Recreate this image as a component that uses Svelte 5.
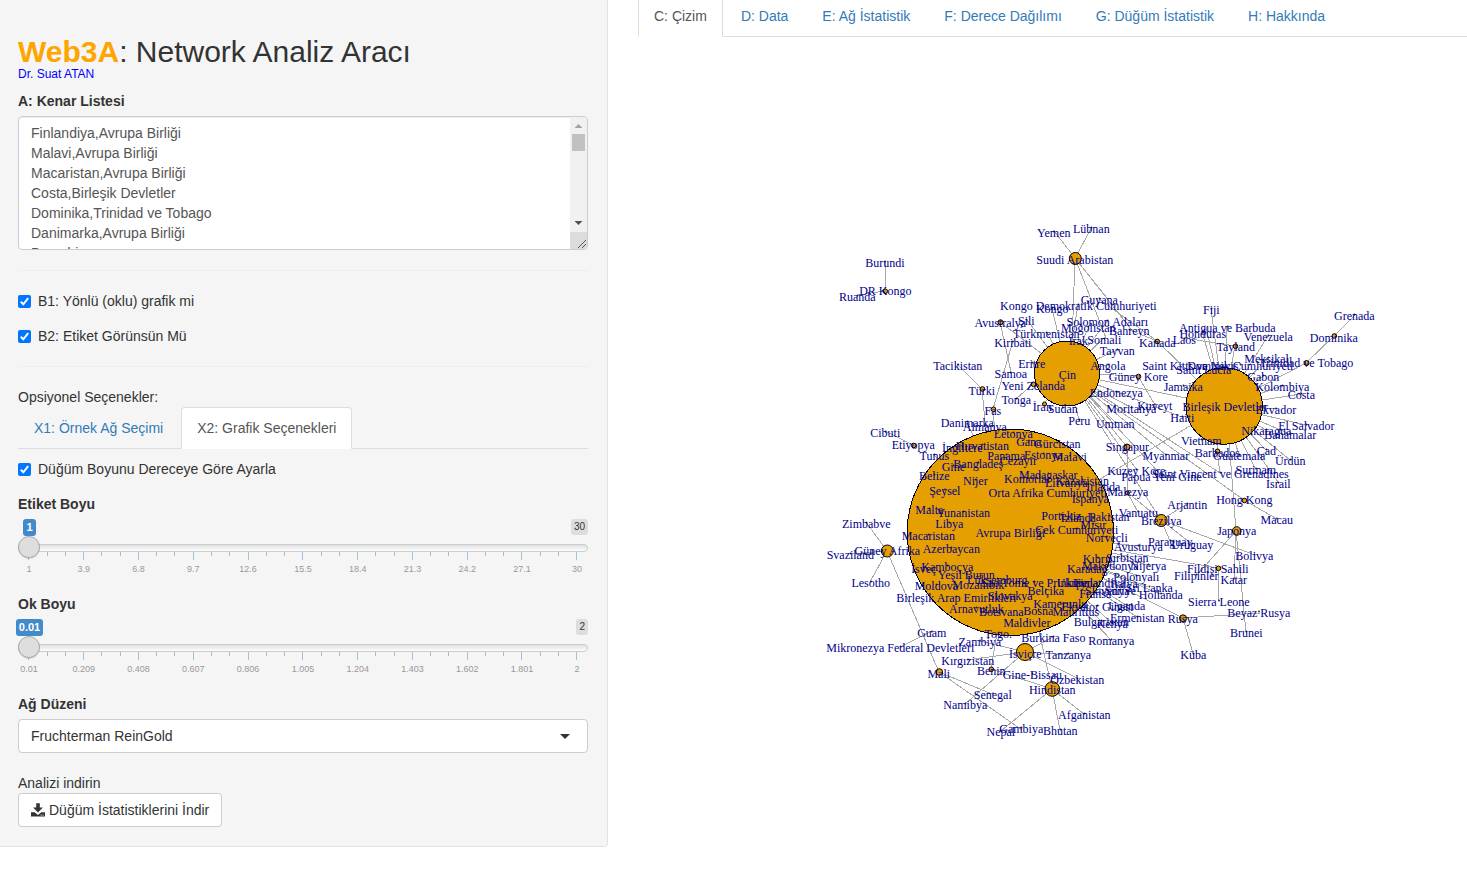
<script>
  const rows = [
    'Finlandiya,Avrupa Birliği',
    'Malavi,Avrupa Birliği',
    'Macaristan,Avrupa Birliği',
    'Costa,Birleşik Devletler',
    'Dominika,Trinidad ve Tobago',
    'Danimarka,Avrupa Birliği',
    'Brezalricya'
  ];

  const tabs = ['C: Çizim', 'D: Data', 'E: Ağ İstatistik', 'F: Derece Dağılımı', 'G: Düğüm İstatistik', 'H: Hakkında'];

  const sliders = [
    { label: 'Etiket Boyu', value: '1', max: '30', ticks: ['1', '3.9', '6.8', '9.7', '12.6', '15.5', '18.4', '21.3', '24.2', '27.1', '30'] },
    { label: 'Ok Boyu', value: '0.01', max: '2', ticks: ['0.01', '0.209', '0.408', '0.607', '0.806', '1.005', '1.204', '1.403', '1.602', '1.801', '2'] }
  ];
  const minor = Array.from({ length: 31 }, (_, i) => i);

  // Circles: x, y, radius
  const hubs = [
    [1010.4, 532.3, 103.2], [1067, 373.5, 32.5], [1224.2, 406, 38.3],
    [1075.3, 258.5, 6], [887.3, 551, 6], [1025, 652, 8.5], [1052.3, 689, 7.3],
    [1161.2, 520.5, 6], [1236.7, 531, 4.3], [1183, 618.3, 3.5], [939.3, 672, 3.3],
    [1127, 447, 3], [1244.5, 500.5, 2.3], [1218.5, 568.3, 2.3], [1157.3, 341.5, 2.3],
    [1138.5, 376.5, 2.3], [1235.5, 346.3, 2.3], [1306.5, 363, 2.5], [1334.3, 336, 2.3],
    [1217.5, 451.3, 2.3], [1000.5, 322.3, 2.5], [982.5, 389, 2.3], [993.5, 409.3, 2.3],
    [913.7, 445.5, 2.3], [885.3, 291.3, 2.3], [1033.5, 384.3, 2.3], [991.3, 669.3, 2.3],
    [1127.3, 492.8, 2], [1044.5, 404, 2]
  ];

  // Labels: text, centre x, centre y
  const labels = [
    ['Yemen', 1053.5, 233], ['Lübnan', 1091, 229], ['Suudi Arabistan', 1074.5, 260],
    ['Burundi', 884.5, 263], ['DR Kongo', 885, 291], ['Ruanda', 857, 297],
    ['Kongo Demokratik Cumhuriyeti', 1078, 306], ['Kongo', 1052, 309], ['Guyana', 1099, 300],
    ['Avustralya', 1000, 323], ['Şili', 1026, 321], ['Türkmenistan', 1046, 334],
    ['Solomon Adaları', 1107, 322], ['Moğolistan', 1088, 328], ['Bahreyn', 1129, 331],
    ['Irak', 1078, 341], ['Somali', 1104, 340], ['Kiribati', 1012.5, 343], ['Tayvan', 1117, 351],
    ['Kanada', 1157, 343], ['Laos', 1184, 340], ['Eritre', 1031.5, 364], ['Angola', 1107.5, 366],
    ['Samoa', 1010.5, 374], ['Çin', 1067, 375], ['Güney Kore', 1138, 377], ['Yeni Zelanda', 1033, 386],
    ['Tonga', 1016, 400], ['İran', 1042, 407], ['Sudan', 1062.5, 409], ['Endonezya', 1116, 393],
    ['Moritanya', 1131, 409], ['Kuveyt', 1154.5, 406], ['Peru', 1079, 421], ['Umman', 1115, 424],
    ['Tacikistan', 957.5, 366], ['Türki', 981.5, 391], ['Fas', 992.5, 411], ['Danimarka', 967, 423],
    ['Almanya', 984.5, 427], ['Cibuti', 885, 433], ['Etiyopya', 913, 445],
    ['Fiji', 1211, 310], ['Antigua ve Barbuda', 1227, 328], ['Honduras', 1202.5, 334],
    ['Venezuela', 1268, 337], ['Tayland', 1235.5, 347], ['Meksikalı', 1268, 359],
    ['Trinidad ve Tobago', 1306, 363], ['Grenada', 1354, 316], ['Dominika', 1333.5, 338],
    ['Saint Kitts ve Nevis', 1190, 366], ['Dominik Cumhuriyeti', 1240, 366], ['Saint Lucia', 1203.5, 370],
    ['Gabon', 1263, 377], ['Jamaika', 1183, 387], ['Kolombiya', 1282, 387], ['Costa', 1301, 395],
    ['Birleşik Devletler', 1225, 407], ['Ekvador', 1275.5, 410], ['Haiti', 1182, 418],
    ['El Salvador', 1306, 426], ['Nikaragua', 1266, 431], ['Bahamalar', 1290, 435],
    ['Vietnam', 1201, 441], ['Barbados', 1217, 453], ['Guatemala', 1239, 456], ['Çad', 1266, 451],
    ['Ürdün', 1290, 461], ['Surinam', 1255.5, 470], ['Saint Vincent ve Grenadines', 1220, 474],
    ['İsrail', 1278, 484], ['Singapur', 1127, 447], ['Myanmar', 1165.5, 456], ['Kuzey Kore', 1136, 471],
    ['Papua Yeni Gine', 1161, 477], ['Malezya', 1127.5, 492], ['Vanuatu', 1138, 513],
    ['Brezilya', 1161, 521], ['Arjantin', 1187, 505], ['Hong Kong', 1244, 500], ['Macau', 1276.5, 520],
    ['Japonya', 1236.5, 531], ['Paraguay', 1170, 542], ['Uruguay', 1192, 545], ['Bolivya', 1254, 556],
    ['Fildişi Sahili', 1217.5, 569], ['Filipinler', 1196, 576], ['Katar', 1233.5, 580],
    ['Sierra Leone', 1218.5, 602], ['Beyaz Rusya', 1258.5, 613], ['Brunei', 1246, 633],
    ['Rusya', 1182.5, 619], ['Küba', 1193, 655],
    ['Letonya', 1013, 434], ['Gana', 1028.5, 442], ['Gürcistan', 1057, 444], ['İngiltere', 962, 448],
    ['Hırvatistan', 982, 446], ['Panama', 1006, 456], ['Estonya', 1043, 455], ['Malavi', 1069.5, 457],
    ['Tunus', 934, 456], ['Bangladeş', 978, 464], ['Cezayir', 1018, 461], ['Gine', 953, 467],
    ['Belize', 934, 476], ['Nijer', 975, 481], ['Komorlar', 1027, 479], ['Madagaskar', 1048, 475],
    ['Litvanya', 1066, 483], ['Kazakistan', 1082, 481], ['İrlanda', 1103, 487],
    ['Orta Afrika Cumhuriyeti', 1047.5, 493], ['İspanya', 1090, 499], ['Şeysel', 944.5, 491],
    ['Malta', 929, 510], ['Yunanistan', 963, 513], ['Libya', 949, 524], ['Macaristan', 928, 536],
    ['Portekiz', 1061, 516], ['İzlanda', 1078, 518], ['Pakistan', 1109, 517], ['Mısır', 1093, 525],
    ['Avrupa Birliği', 1010, 533], ['Çek Cumhuriyeti', 1076.5, 530], ['Norveçli', 1106.5, 538],
    ['Avusturya', 1138, 547], ['Azerbaycan', 951, 549], ['Kıbrıs', 1097.5, 559], ['Sırbistan', 1127, 558],
    ['Makedonya', 1110, 566], ['Nijerya', 1148, 566], ['Karadağ', 1087, 569], ['Polonyalı', 1136, 577],
    ['Kamboçya', 947, 567], ['İsveç', 923.5, 569], ['Yeşil Burun', 966, 575], ['Moldova', 936, 586],
    ['Mozambik', 978, 585], ['Lüksemburg', 997, 580], ['Sao Tome ve Prinkipe', 1034, 583],
    ['Ukrayna', 1077, 583], ['Finlandiya', 1099, 583], ['İtalya', 1124, 584], ['Sri Lanka', 1149, 588],
    ['Slovenya', 1107, 591], ['Suriye', 1120, 591], ['Hollanda', 1160.5, 595], ['Fransa', 1095, 594],
    ['Belçika', 1045.5, 591], ['Slovakya', 1010, 596], ['Birleşik Arap Emirlikleri', 956, 598],
    ['Kamerunlu', 1060, 604], ['Arnavutluk', 976, 609], ['Botsvana', 1001, 612], ['Bosna', 1038, 611],
    ['Mauritius', 1075.5, 612], ['Ekvator Ginesi', 1097, 607], ['Uganda', 1126.5, 606],
    ['Ermenistan', 1137, 618], ['Bulgaristan', 1101, 622], ['Kenya', 1112, 624], ['Maldivler', 1026.5, 623],
    ['Romanya', 1111, 641], ['Zimbabve', 866, 524], ['Güney Afrika', 887, 551], ['Svaziland', 850, 555],
    ['Lesotho', 870.5, 583], ['Guam', 931.5, 633], ['Mikronezya Federal Devletleri', 900, 648],
    ['Mali', 938.5, 674], ['Togo.', 998, 634], ['Zambiya', 979.5, 642], ['Kırgızistan', 967.5, 661],
    ['Benin', 991, 671], ['İsviçre', 1025, 654], ['Burkina Faso', 1053, 638], ['Tanzanya', 1068, 655],
    ['Gine-Bissau', 1032, 675], ['Özbekistan', 1077, 680], ['Hindistan', 1052, 690],
    ['Senegal', 992.5, 695], ['Namibya', 965, 705], ['Afganistan', 1084, 715], ['Gambiya', 1021, 729],
    ['Nepal', 1000.5, 732], ['Bhutan', 1060, 731]
  ];

  // Leaf countries get a tiny dot; hubs already have their own circle
  const leaves = labels.filter(([, x, y]) => !hubs.some(([hx, hy]) => Math.hypot(hx - x, hy - y) < 4));

  // Edges: x1, y1, x2, y2
  const edges = [
    [1054, 231, 1075, 258], [1092, 227, 1075, 258], [1075, 258, 1072, 345], [1075, 258, 1106, 338],
    [1075, 258, 1131, 329], [1075, 258, 1107, 298], [885, 262, 885, 291], [858, 295, 885, 291],
    [1000, 322, 1067, 373], [1000, 322, 1011, 372], [1013, 341, 993, 409],
    [1027, 320, 1067, 373], [1052, 308, 1067, 373], [1078, 305, 1067, 373], [1047, 332, 1067, 373],
    [1099, 299, 1157, 341], [1108, 320, 1067, 373], [1089, 327, 1067, 373], [1104, 338, 1067, 373],
    [1117, 350, 1067, 373], [1107, 365, 1067, 373], [1130, 330, 1157, 341], [1157, 341, 1224, 406],
    [1138, 376, 1067, 373], [1138, 376, 1155, 405], [1033, 384, 1016, 399], [1044, 404, 1067, 373],
    [1062, 407, 1067, 373], [1079, 420, 1067, 373], [1032, 363, 1067, 373],
    [1067, 373, 1224, 406], [1067, 373, 1116, 392], [1067, 373, 1132, 408], [1067, 373, 1116, 423],
    [1067, 373, 1127, 447], [1067, 373, 1166, 455], [1067, 373, 1137, 470], [1067, 373, 1162, 476],
    [1067, 373, 1244, 500], [1067, 373, 1161, 520], [1067, 373, 1182, 417], [1067, 373, 1220, 473],
    [957, 364, 982, 389], [982, 389, 986, 432], [993, 409, 995, 435], [967, 422, 975, 440],
    [885, 431, 913, 445], [934, 455, 960, 480],
    [1211, 309, 1224, 406], [1202, 332, 1224, 406], [1206, 327, 1224, 406], [1227, 326, 1224, 406],
    [1268, 336, 1224, 406], [1235, 346, 1224, 406], [1235, 346, 1184, 338], [1268, 357, 1224, 406],
    [1306, 363, 1224, 406], [1306, 363, 1334, 336], [1334, 336, 1355, 315], [1263, 376, 1224, 406],
    [1282, 386, 1224, 406], [1301, 394, 1224, 406], [1275, 409, 1224, 406], [1306, 425, 1224, 406],
    [1290, 434, 1224, 406], [1266, 430, 1224, 406], [1266, 450, 1224, 406], [1290, 460, 1224, 406],
    [1278, 482, 1224, 406], [1255, 468, 1224, 406], [1239, 455, 1224, 406], [1217, 451, 1224, 406],
    [1217, 451, 1220, 473], [1201, 440, 1224, 406], [1183, 386, 1224, 406], [1182, 417, 1224, 406],
    [1224, 406, 1010, 532], [1229, 440, 1236, 531], [1244, 500, 1277, 519],
    [1127, 447, 1127, 492], [1127, 492, 1138, 512], [1127, 492, 1161, 520],
    [1161, 520, 1187, 504], [1161, 520, 1170, 541], [1161, 520, 1192, 544], [1161, 520, 1255, 555],
    [1236, 531, 1197, 575], [1236, 531, 1234, 579], [1236, 531, 1246, 632],
    [1010, 532, 1218, 568], [1218, 568, 1219, 600], [1010, 532, 1183, 618],
    [1183, 618, 1260, 613], [1183, 618, 1193, 653],
    [1010, 532, 1138, 546], [1010, 532, 1127, 556], [1010, 532, 1148, 565], [1010, 532, 1136, 575],
    [1010, 532, 1148, 587], [1010, 532, 1160, 594], [1010, 532, 1126, 605], [1010, 532, 1137, 617],
    [1010, 532, 1101, 621], [1010, 532, 1112, 623], [1010, 532, 1111, 640],
    [866, 522, 887, 551], [850, 554, 887, 551], [870, 582, 887, 551], [887, 551, 939, 672],
    [932, 631, 900, 647], [939, 672, 992, 694], [939, 672, 1022, 730],
    [997, 633, 991, 669], [980, 641, 1025, 652], [967, 660, 1025, 652], [1025, 652, 1053, 637],
    [1025, 652, 1068, 655], [1025, 652, 1077, 678], [1025, 652, 965, 704], [997, 633, 1000, 620],
    [1039, 631, 1052, 689], [1052, 689, 991, 669], [1052, 689, 1084, 714], [1052, 689, 1060, 730],
    [1052, 689, 1001, 731]
  ];
</script>

<div class="page">
  <aside class="well">
    <h2><b>Web3A</b>: Network Analiz Aracı</h2>
    <p class="author">Dr. Suat ATAN</p>
    <div class="label">A: Kenar Listesi</div>
    <div class="textarea">
      <div class="lines">
        {#each rows as row}<div>{row}</div>{/each}
      </div>
      <div class="scroll">
        <svg width="17" height="132" viewBox="0 0 17 132">
          <rect width="17" height="132" fill="#f1f1f1" />
          <path d="M4.5 11 L8.5 7 L12.5 11Z" fill="#a3a3a3" />
          <rect x="2" y="17" width="13" height="17" fill="#c1c1c1" />
          <path d="M4.5 104 L8.5 108 L12.5 104Z" fill="#505050" />
          <rect y="115" width="17" height="17" fill="#dcdcdc" />
          <path d="M8 131 L16 123 M12 131 L16 127" stroke="#555" stroke-width="1" />
        </svg>
      </div>
    </div>
    <hr />
    {#each ['B1: Yönlü (oklu) grafik mi', 'B2: Etiket Görünsün Mü'] as text}
      <div class="check">
        {@render tick()}<span>{text}</span>
      </div>
    {/each}
    <hr class="second" />
    <div class="optional">Opsiyonel Seçenekler:</div>
    <div class="tabs inner">
      <a class="tab">X1: Örnek Ağ Seçimi</a>
      <a class="tab active">X2: Grafik Seçenekleri</a>
    </div>
    <div class="check third">{@render tick()}<span>Düğüm Boyunu Dereceye Göre Ayarla</span></div>
    {#each sliders as s}
      <div class="slider">
        <div class="label">{s.label}</div>
        <div class="badges">
          <div class="from"><span>{s.value}</span></div>
          <span class="max">{s.max}</span>
        </div>
        <svg width="574" height="44" viewBox="0 0 574 44">
          <defs>
            <linearGradient id="rail" x1="0" y1="0" x2="0" y2="1">
              <stop offset="0" stop-color="#dedede" /><stop offset="1" stop-color="#ffffff" />
            </linearGradient>
          </defs>
          <rect x="0.5" y="8.5" width="569" height="7" rx="3.5" fill="url(#rail)" stroke="#ccc" />
          {#each minor as i}
            <line x1={Math.round(10.4 + i * 18.26) + 0.5} x2={Math.round(10.4 + i * 18.26) + 0.5} y1="16" y2={i % 3 ? 20 : 24} stroke={i % 3 ? '#b8b8b8' : '#9fc4e2'} />
          {/each}
          {#each s.ticks as t, i}
            <text x={10.9 + i * 54.8} y="36">{t}</text>
          {/each}
          <circle cx="11" cy="12" r="11" fill="#000" opacity="0.13" />
          <circle cx="11" cy="11" r="10.5" fill="#dedede" stroke="#ababab" />
        </svg>
      </div>
    {/each}
    <div class="label layout">Ağ Düzeni</div>
    <div class="select"><span>Fruchterman ReinGold</span><i></i></div>
    <div class="download-title">Analizi indirin</div>
    <button>
      <svg width="14" height="14" viewBox="0 0 14 14" fill="#333">
        <path d="M5.2 0.2H8.8V4.6H11.9L7 9.4L2.1 4.6H5.2Z" />
        <path d="M0 9.2H3.7L7 12L10.3 9.2H14V13.6H0Z" />
        <rect x="9.6" y="11.6" width="1" height="1" fill="#fff" /><rect x="11.6" y="11.6" width="1" height="1" fill="#fff" />
      </svg>
      Düğüm İstatistiklerini İndir
    </button>
  </aside>

  <main>
    <div class="tabs">
      {#each tabs as t, i}<a class="tab" class:active={i === 0}>{t}</a>{/each}
    </div>
    <svg class="graph" width="829" height="838" viewBox="638 37 829 838">
      <g stroke="#a9a9a9" shape-rendering="crispEdges">
        {#each edges as [x1, y1, x2, y2]}<line {x1} {y1} {x2} {y2} />{/each}
      </g>
      <g fill="#e69f00" stroke="#000">
        {#each hubs as [cx, cy, r]}<circle {cx} {cy} {r} shape-rendering={r > 20 ? 'crispEdges' : 'auto'} />{/each}
      </g>
      <g fill="#222">
        {#each leaves as [name, x, y]}<circle cx={x + 0.5} cy={y - 1.5} r="0.9" />{/each}
      </g>
      <g class="names">
        {#each labels as [name, x, y]}<text x={x + 0.3} y={y + 4}>{name}</text>{/each}
      </g>
    </svg>
  </main>
</div>

{#snippet tick()}
  <svg class="box" width="13" height="13" viewBox="0 0 13 13">
    <rect width="13" height="13" rx="2" fill="#0075ff" />
    <path d="M2.8 6.8 L5.3 9.3 L10.2 3.2" fill="none" stroke="#fff" stroke-width="2" />
  </svg>
{/snippet}

<style>
  :global(body) { background: #fff; overflow: hidden; }
  .page {
    display: flex; gap: 30px; height: 875px; overflow: hidden; align-items: flex-start;
    font: 14px/20px "Liberation Sans", Arial, sans-serif; color: #333;
  }
  .page * { box-sizing: border-box; }
  .well {
    flex: none; width: 608px; height: 847px; padding: 35px 19px 0 18px;
    background: #f5f5f5; border: solid #e3e3e3; border-width: 0 1px 1px 0; border-radius: 0 0 4px 0;
  }
  h2 { margin: 0; font-size: 30px; line-height: 33px; font-weight: 400; }
  h2 b { color: orange; }
  .author { margin: -2px 0 0; font-size: 12px; line-height: 17px; color: blue; }
  .label { font-weight: 700; }
  .author + .label { margin-top: 8px; }
  .textarea {
    display: flex; width: 570px; height: 134px; margin-top: 5px; overflow: hidden;
    background: #fff; border: 1px solid #ccc; border-radius: 4px; color: #555;
    box-shadow: inset 0 1px 1px rgba(0, 0, 0, .075);
  }
  .lines { flex: 1; padding: 6px 12px; white-space: nowrap; }
  .scroll { width: 17px; }
  .scroll svg { display: block; }
  hr { margin: 20px 0; border: 0; border-top: 1px solid #eee; width: 570px; }
  .check { display: flex; gap: 7px; align-items: center; height: 20px; margin-bottom: 15px; }
  hr.second { margin: 20px 0; }
  .optional { height: 20px; }
  .tabs { display: flex; gap: 2px; height: 42px; box-shadow: inset 0 -1px #ddd; }
  .tab { height: 42px; padding: 10px 15px; border: 1px solid transparent; color: #337ab7; white-space: nowrap; }
  .tab.active { background: #fff; color: #555; border-color: #ddd #ddd #fff; border-radius: 4px 4px 0 0; }
  .tabs.inner { width: 570px; }
  .third { margin: 10px 0 15px; }
  .slider { height: 100px; }
  .slider > svg { display: block; overflow: visible; }
  .slider text { font-size: 9px; fill: #999; text-anchor: middle; }
  .badges { display: flex; justify-content: space-between; height: 17px; margin-top: 5px; width: 570px; font-size: 11px; }
  .from { width: 23px; display: flex; justify-content: center; }
  .from span { height: 17px; padding: 0 3px; line-height: 17px; background: #428bca; color: #fff; font-weight: 700; border-radius: 3px; }
  .max { height: 16px; padding: 0 3px; font-size: 10px; line-height: 16px; background: #ddd; border-radius: 3px; }
  .select {
    display: flex; align-items: center; justify-content: space-between; width: 570px; height: 34px; margin-top: 5px;
    padding: 0 17px 0 12px; background: #fff; border: 1px solid #ccc; border-radius: 4px;
  }
  .select i { border: 5px solid transparent; border-top-color: #333; border-bottom: 0; }
  .download-title { margin-top: 20px; }
  button {
    display: flex; align-items: center; gap: 4px; width: 204px; height: 34px; padding: 0 0 0 12px; white-space: nowrap;
    background: #fff; border: 1px solid #ccc; border-radius: 4px; font: inherit; color: #333;
  }
  main { flex: 1; min-width: 0; }
  main .tabs { margin-top: -5px; }
  .graph { display: block; }
  .names { font: 12px "Liberation Serif", "Times New Roman", serif; fill: #00008b; text-anchor: middle; }
</style>
